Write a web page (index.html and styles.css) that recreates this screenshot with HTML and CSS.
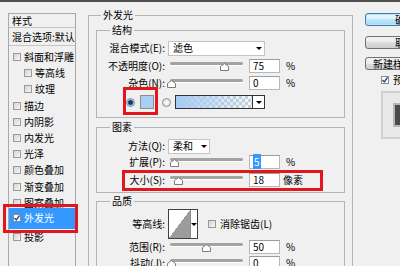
FILE: index.html
```html
<!DOCTYPE html>
<html lang="zh-CN">
<head>
    <meta charset="UTF-8">
    <meta name="viewport" content="width=device-width, initial-scale=1.0">
    <title>图层样式 - 外发光</title>
    <link rel="stylesheet" href="styles.css">
</head>
<body>

    <div class="titlebar"></div>

    <div class="dialog">

        <!-- 左侧样式列表 -->
        <div class="style-list">
            <div class="list-head">样式</div>
            <div class="list-blend">混合选项:默认</div>
            <div class="list-items">
                <div class="item"><span class="check"></span>斜面和浮雕</div>
                <div class="item sub"><span class="check"></span>等高线</div>
                <div class="item sub"><span class="check"></span>纹理</div>
                <div class="item"><span class="check"></span>描边</div>
                <div class="item"><span class="check"></span>内阴影</div>
                <div class="item"><span class="check"></span>内发光</div>
                <div class="item"><span class="check"></span>光泽</div>
                <div class="item"><span class="check"></span>颜色叠加</div>
                <div class="item"><span class="check"></span>渐变叠加</div>
                <div class="item"><span class="check"></span>图案叠加</div>
                <div class="item selected">
                    <span class="check on"><svg width="6" height="6" viewBox="0 0 6 6"><path d="M0.5 3 L2.3 5 L5.5 0.5" fill="none" stroke="#23479a" stroke-width="1.3"/></svg></span>外发光
                </div>
                <div class="item"><span class="check"></span>投影</div>
            </div>
        </div>

        <!-- 外发光设置 -->
        <fieldset class="panel">
            <legend>外发光</legend>

            <fieldset class="group group-structure">
                <legend>结构</legend>
                <div class="row row-mode">
                    <span class="label">混合模式(E):</span>
                    <div class="select select-wide"><span>滤色</span><i class="arrow"></i></div>
                </div>
                <div class="row row-opacity">
                    <span class="label">不透明度(O):</span>
                    <div class="slider"><span class="thumb" style="left: 50px"><svg width="9" height="8" viewBox="0 0 9 8"><path d="M0.5 3.5 L4.5 0.5 L8.5 3.5 V7.5 H0.5 Z" fill="#fff" stroke="#7a7a7a"/></svg></span></div>
                    <div class="field">75</div>
                    <span class="unit">%</span>
                </div>
                <div class="row row-noise">
                    <span class="label">杂色(N):</span>
                    <div class="slider"><span class="thumb" style="left: -3px"><svg width="9" height="8" viewBox="0 0 9 8"><path d="M0.5 3.5 L4.5 0.5 L8.5 3.5 V7.5 H0.5 Z" fill="#fff" stroke="#7a7a7a"/></svg></span></div>
                    <div class="field">0</div>
                    <span class="unit">%</span>
                </div>
                <div class="row row-color">
                    <span class="mark">
                        <span class="radio on"></span>
                        <span class="swatch"></span>
                    </span>
                    <span class="radio radio-grad"></span>
                    <div class="gradient">
                        <span class="grad-fill"></span>
                        <span class="grad-arrow"><i class="arrow"></i></span>
                    </div>
                </div>
            </fieldset>

            <fieldset class="group group-elements">
                <legend>图素</legend>
                <div class="row row-method">
                    <span class="label">方法(Q):</span>
                    <div class="select select-short"><span>柔和</span><i class="arrow"></i></div>
                </div>
                <div class="row">
                    <span class="label">扩展(P):</span>
                    <div class="slider"><span class="thumb" style="left: 0px"><svg width="9" height="8" viewBox="0 0 9 8"><path d="M0.5 3.5 L4.5 0.5 L8.5 3.5 V7.5 H0.5 Z" fill="#fff" stroke="#7a7a7a"/></svg></span></div>
                    <div class="field"><span class="sel">5</span></div>
                    <span class="unit">%</span>
                </div>
                <div class="row row-size">
                    <span class="label">大小(S):</span>
                    <div class="slider"><span class="thumb" style="left: 4px"><svg width="9" height="8" viewBox="0 0 9 8"><path d="M0.5 3.5 L4.5 0.5 L8.5 3.5 V7.5 H0.5 Z" fill="#fff" stroke="#7a7a7a"/></svg></span></div>
                    <div class="field">18</div>
                    <span class="unit unit-px">像素</span>
                </div>
            </fieldset>

            <fieldset class="group group-quality">
                <legend>品质</legend>
                <div class="row row-contour">
                    <span class="label">等高线:</span>
                    <div class="contour">
                        <span class="contour-curve"></span>
                        <span class="contour-arrow"><i class="arrow"></i></span>
                    </div>
                    <span class="check aa-check"></span>
                    <span class="aa-text">消除锯齿(L)</span>
                </div>
                <div class="row">
                    <span class="label">范围(R):</span>
                    <div class="slider"><span class="thumb" style="left: 32px"><svg width="9" height="8" viewBox="0 0 9 8"><path d="M0.5 3.5 L4.5 0.5 L8.5 3.5 V7.5 H0.5 Z" fill="#fff" stroke="#7a7a7a"/></svg></span></div>
                    <div class="field">50</div>
                    <span class="unit">%</span>
                </div>
                <div class="row">
                    <span class="label">抖动(J):</span>
                    <div class="slider"><span class="thumb" style="left: -3px"><svg width="9" height="8" viewBox="0 0 9 8"><path d="M0.5 3.5 L4.5 0.5 L8.5 3.5 V7.5 H0.5 Z" fill="#fff" stroke="#7a7a7a"/></svg></span></div>
                    <div class="field">0</div>
                    <span class="unit">%</span>
                </div>
            </fieldset>
        </fieldset>

        <!-- 右侧按钮 -->
        <div class="actions">
            <button class="btn btn-default">确定</button>
            <button class="btn btn-cancel">取消</button>
            <button class="btn btn-new">新建样式(W)...</button>
            <div class="preview-check">
                <span class="check on"><svg width="6" height="6" viewBox="0 0 6 6"><path d="M0.5 3 L2.3 5 L5.5 0.5" fill="none" stroke="#23479a" stroke-width="1.3"/></svg></span>
                <span>预览(V)</span>
            </div>
            <div class="preview"><div class="preview-swatch"></div></div>
        </div>

    </div>

</body>
</html>
```

FILE: styles.css
```css
/* 基本设置 */
* {
    margin: 0;
    padding: 0;
    box-sizing: border-box;
}

body {
    width: 400px;
    height: 266px;
    overflow: hidden;
    background-color: #f0f0f0;
    font-family: "Noto Sans CJK SC", "Noto Sans", sans-serif;
    font-size: 10px;
    line-height: 14px;
    color: #000;
}

.titlebar {
    height: 2px;
    background-color: #4f4f4f;
}

.dialog {
    display: flex;
    align-items: flex-start;
    padding-left: 8px;
}

.dialog > * {
    flex-shrink: 0;
}

/* 左侧列表 */
.style-list {
    width: 68px;
    height: 262px;
    margin-top: 11px;
    border: 1px solid #a9a9a9;
}

.list-head {
    height: 14px;
    line-height: 13px;
    padding-left: 3px;
    border-bottom: 1px solid #c4c4c4;
}

.list-blend {
    height: 18px;
    line-height: 17px;
    padding-left: 3px;
    border-bottom: 1px solid #c4c4c4;
    white-space: nowrap;
    overflow: hidden;
}

.list-items {
    padding-top: 3px;
}

.item {
    height: 16.2px;
    display: flex;
    align-items: center;
    gap: 3px;
    padding-left: 4px;
    white-space: nowrap;
}

.item.sub {
    padding-left: 15px;
}

.item.selected {
    height: 21px;
    margin-top: -3px;
    background-color: #3399ff;
    color: #fff;
    position: relative;
}

.item.selected::after {
    content: "";
    position: absolute;
    left: -6px;
    top: -4px;
    right: -3px;
    bottom: -4px;
    border: 3px solid #e3161d;
}

.check {
    width: 8px;
    height: 8px;
    flex-shrink: 0;
    border: 1px solid #9a9a9a;
    background: linear-gradient(135deg, #d4d4d4, #f7f7f7);
    display: flex;
    align-items: center;
    justify-content: center;
}

.check.on {
    background: #fff;
    border-color: #8a8a8a;
}

/* 主面板 */
fieldset {
    min-width: 0;
}

.panel {
    width: 265px;
    height: 270px;
    margin: 6px 0 0 12px;
    padding: 1px 7px 0;
    border: 1px solid #b3b3b3;
}

.panel > legend {
    margin-left: 5px;
    padding: 0 2px;
    line-height: 14px;
}

.group {
    border: 1px solid #b3b3b3;
    padding: 0;
}

.group > legend {
    margin-left: 13px;
    padding: 0 2px;
    line-height: 14px;
}

.group-structure {
    padding-bottom: 5px;
}

.group-elements {
    margin-top: 2px;
    padding-bottom: 4px;
}

.group-quality {
    margin-top: 1px;
    height: 90px;
}

.row {
    display: flex;
    align-items: center;
    height: 16px;
    white-space: nowrap;
}

.label {
    width: 68px;
    flex-shrink: 0;
    text-align: right;
}

.row-mode {
    margin-top: 3px;
}

.row-opacity {
    margin-top: 2px;
}

.row-noise {
    margin-top: 1px;
}

.row-method {
    margin-top: 4px;
}

.row-size {
    margin-top: 2px;
    position: relative;
}

.row-size::after {
    content: "";
    position: absolute;
    left: 25px;
    right: 21px;
    top: -2px;
    bottom: -3px;
    border: 3px solid #e3161d;
}

/* 下拉框 */
.select {
    margin-left: 3px;
    height: 15px;
    border: 1px solid #c3c3c3;
    background-color: #fff;
    display: flex;
    align-items: center;
    padding-left: 4px;
}

.select-wide {
    width: 97px;
}

.select-short {
    width: 42px;
}

.arrow {
    display: block;
    width: 0;
    height: 0;
    border-left: 3px solid transparent;
    border-right: 3px solid transparent;
    border-top: 3px solid #000;
}

.select .arrow {
    margin-left: auto;
    margin-right: 2px;
}

/* 滑块 */
.slider {
    width: 73px;
    height: 12px;
    margin-left: 5px;
    position: relative;
}

.slider::before {
    content: "";
    position: absolute;
    left: 0;
    right: 0;
    top: 2px;
    height: 3px;
    border-radius: 2px;
    background-color: #a3a3a3;
    box-shadow: 0 1px 0 #fff;
}

.thumb {
    position: absolute;
    top: 3px;
    width: 9px;
    height: 8px;
    display: flex;
}

.field {
    width: 31px;
    height: 14px;
    margin-left: 6px;
    background-color: #fff;
    border: 1px solid #b8b8b8;
    border-top-color: #9c9c9c;
    padding-left: 3px;
    line-height: 12px;
}

.field .sel {
    background-color: #3399ff;
    color: #fff;
    padding: 0 1px;
}

.unit {
    margin-left: 6px;
}

.unit-px {
    margin-left: 3px;
}

/* 颜色 / 渐变 */
.row-color {
    height: 20px;
    margin-top: 1px;
    padding-left: 29px;
}

.mark {
    display: flex;
    align-items: center;
    position: relative;
}

.mark::after {
    content: "";
    position: absolute;
    left: -3px;
    right: -4px;
    top: -8px;
    bottom: -6px;
    border: 3px solid #e3161d;
}

.radio {
    width: 9px;
    height: 9px;
    border-radius: 50%;
    border: 1px solid #8c8c8c;
    background: radial-gradient(circle, #ffffff, #d8d8d8);
    flex-shrink: 0;
}

.radio.on {
    background: radial-gradient(circle, #17365a 0, #17365a 1.8px, #4f8fc9 2.6px, #e2eef9 3.5px);
}

.swatch {
    width: 14px;
    height: 14px;
    margin-left: 5px;
    border: 1px solid #8e8e8e;
    background-color: #a9cff5;
}

.radio-grad {
    margin-left: 8px;
}

.gradient {
    width: 90px;
    height: 14px;
    margin-left: 4px;
    border: 1px solid #333;
    display: flex;
}

.grad-fill {
    flex: 1;
    background:
        linear-gradient(to right, #a6ccf3, rgba(166, 204, 243, 0.15)),
        repeating-conic-gradient(#cfcfcf 0 25%, #ffffff 0 50%) 0 0 / 6px 6px;
}

.grad-arrow {
    width: 12px;
    border-left: 1px solid #333;
    background-color: #fff;
    display: flex;
    align-items: center;
    justify-content: center;
}

/* 等高线 */
.row-contour {
    height: 30px;
    margin-top: 1px;
}

.contour {
    width: 30px;
    height: 30px;
    margin-left: 3px;
    border: 1px solid #404040;
    display: flex;
}

.contour-curve {
    width: 22px;
    background: linear-gradient(to top left, #9c9c9c 50%, #ffffff 50%);
}

.contour-arrow {
    flex: 1;
    border-left: 1px solid #8a8a8a;
    background-color: #fff;
    display: flex;
    align-items: center;
    justify-content: center;
}

.aa-check {
    margin-left: 10px;
}

.aa-text {
    margin-left: 4px;
}

/* 右侧按钮 */
.actions {
    width: 80px;
    margin: 11px 0 0 12px;
}

.btn {
    display: block;
    width: 80px;
    height: 13px;
    border: 1px solid #707070;
    border-radius: 3px;
    background: linear-gradient(#f3f3f3, #ebebeb 50%, #dcdcdc 50%, #cfcfcf);
    font-family: inherit;
    font-size: 10px;
    line-height: 11px;
    text-align: center;
    color: #000;
    white-space: nowrap;
}

.btn-default {
    border-color: #3c7fb1;
    background: linear-gradient(#eaf6fd, #d9f0fc 50%, #bee6fd 50%, #a7d9f5);
    box-shadow: inset 0 0 0 1px #bfe3f7;
}

.btn-cancel {
    margin-top: 10px;
}

.btn-new {
    margin-top: 8px;
}

.preview-check {
    display: flex;
    align-items: center;
    gap: 4px;
    height: 10px;
    margin-top: 5px;
    padding-left: 16px;
    white-space: nowrap;
}

.preview {
    width: 48px;
    height: 48px;
    margin: 6px 0 0 16px;
    border: 2px solid #cfcfcf;
    background-color: #e9e9e9;
    padding: 10px;
}

.preview-swatch {
    width: 24px;
    height: 24px;
    background-color: #4a4a4a;
    border: 2px solid #b5b5b5;
}
```
